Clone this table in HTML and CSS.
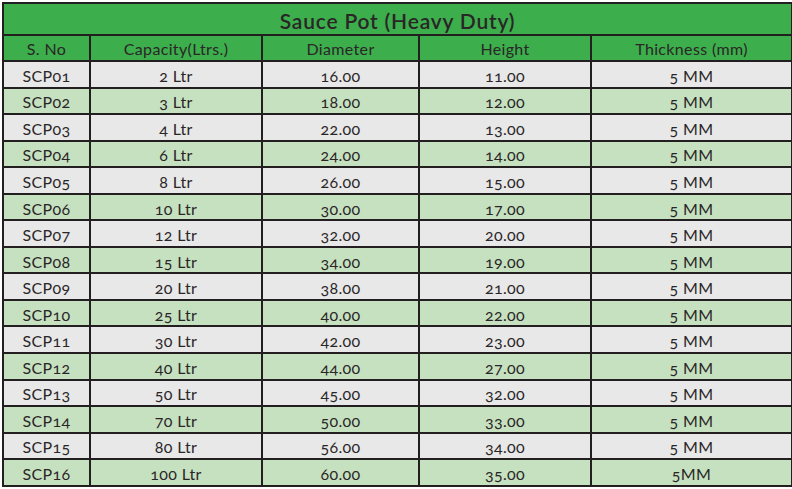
FILE: index.html
```html
<!DOCTYPE html>
<html>
<head>
<meta charset="utf-8">
<link rel="stylesheet" href="styles.css">
</head>
<body>
<table class="spec">
  <colgroup>
    <col class="c1"><col class="c2"><col class="c3"><col class="c4"><col class="c5">
  </colgroup>
  <thead>
    <tr class="title"><th colspan="5">Sauce Pot (Heavy Duty)</th></tr>
    <tr class="head"><th>S. No</th><th>Capacity(Ltrs.)</th><th>Diameter</th><th>Height</th><th>Thickness (mm)</th></tr>
  </thead>
  <tbody>
    <tr class="odd"><td>SCP01</td><td>2 Ltr</td><td>16.00</td><td>11.00</td><td>5 MM</td></tr>
    <tr class="even"><td>SCP02</td><td>3 Ltr</td><td>18.00</td><td>12.00</td><td>5 MM</td></tr>
    <tr class="odd"><td>SCP03</td><td>4 Ltr</td><td>22.00</td><td>13.00</td><td>5 MM</td></tr>
    <tr class="even"><td>SCP04</td><td>6 Ltr</td><td>24.00</td><td>14.00</td><td>5 MM</td></tr>
    <tr class="odd"><td>SCP05</td><td>8 Ltr</td><td>26.00</td><td>15.00</td><td>5 MM</td></tr>
    <tr class="even"><td>SCP06</td><td>10 Ltr</td><td>30.00</td><td>17.00</td><td>5 MM</td></tr>
    <tr class="odd"><td>SCP07</td><td>12 Ltr</td><td>32.00</td><td>20.00</td><td>5 MM</td></tr>
    <tr class="even"><td>SCP08</td><td>15 Ltr</td><td>34.00</td><td>19.00</td><td>5 MM</td></tr>
    <tr class="odd"><td>SCP09</td><td>20 Ltr</td><td>38.00</td><td>21.00</td><td>5 MM</td></tr>
    <tr class="even"><td>SCP10</td><td>25 Ltr</td><td>40.00</td><td>22.00</td><td>5 MM</td></tr>
    <tr class="odd"><td>SCP11</td><td>30 Ltr</td><td>42.00</td><td>23.00</td><td>5 MM</td></tr>
    <tr class="even"><td>SCP12</td><td>40 Ltr</td><td>44.00</td><td>27.00</td><td>5 MM</td></tr>
    <tr class="odd"><td>SCP13</td><td>50 Ltr</td><td>45.00</td><td>32.00</td><td>5 MM</td></tr>
    <tr class="even"><td>SCP14</td><td>70 Ltr</td><td>50.00</td><td>33.00</td><td>5 MM</td></tr>
    <tr class="odd"><td>SCP15</td><td>80 Ltr</td><td>56.00</td><td>34.00</td><td>5 MM</td></tr>
    <tr class="even"><td>SCP16</td><td>100 Ltr</td><td>60.00</td><td>35.00</td><td>5MM</td></tr>
  </tbody>
</table>
</body>
</html>
```
FILE: styles.css
```css
html, body {
  margin: 0;
  padding: 0;
  background: #ffffff;
}
.spec {
  margin: 2px 0 0 2px;
  width: 789px;
  border-collapse: collapse;
  table-layout: fixed;
  font-family: Lato, "Open Sans", sans-serif;
  font-variant-numeric: oldstyle-nums;
  color: #2a2627;
  border: 2px solid #231f20;
}
.c1 { width: 87px; }
.c2 { width: 172px; }
.c3 { width: 157px; }
.c4 { width: 172px; }
.c5 { width: 201px; }
th, td {
  border: 2px solid #231f20;
  padding: 0;
  text-align: center;
  font-weight: 400;
  line-height: 1;
  letter-spacing: 0.35px;
}
.title th {
  background: #3cae4c;
  font-size: 21px;
  font-weight: 600;
  letter-spacing: 0.8px;
  height: 32px;
  padding-top: 2px;
  box-sizing: border-box;
}
.head th {
  background: #3cae4c;
  font-size: 16px;
  height: 26px;
  padding-top: 2px;
  box-sizing: border-box;
}
td {
  font-size: 16px;
  height: 26.56px;
  box-sizing: border-box;
  padding-top: 3px;
}
.odd td { background: #e8e8e8; }
.even td { background: #c6e1c0; }
```
